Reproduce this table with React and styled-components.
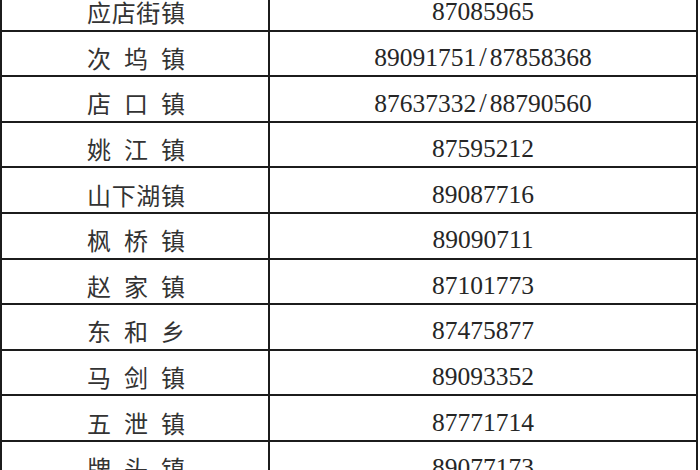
import React from 'react';
import styled, { createGlobalStyle } from 'styled-components';

const GlobalStyle = createGlobalStyle`
  html, body {
    margin: 0;
    padding: 0;
    background: #fff;
    overflow: hidden;
  }
`;

const rows = [
  { name: '应店街镇', phone: '87085965' },
  { name: '次 坞 镇', phone: '89091751/87858368' },
  { name: '店 口 镇', phone: '87637332/88790560' },
  { name: '姚 江 镇', phone: '87595212' },
  { name: '山下湖镇', phone: '89087716' },
  { name: '枫 桥 镇', phone: '89090711' },
  { name: '赵 家 镇', phone: '87101773' },
  { name: '东 和 乡', phone: '87475877' },
  { name: '马 剑 镇', phone: '89093352' },
  { name: '五 泄 镇', phone: '87771714' },
  { name: '牌 头 镇', phone: '89077173' },
];

const Page = styled.div`
  width: 700px;
  height: 470px;
  overflow: hidden;
  background: #fff;
`;

const Table = styled.div`
  width: 698px;
  margin-top: -16px;
  border-top: 2px solid #1c1c1c;
  border-left: 2px solid #1c1c1c;
  border-right: 2px solid #1c1c1c;
  box-sizing: border-box;
`;

const Row = styled.div`
  display: grid;
  grid-template-columns: 268px 1fr;
  height: 45.6px;
  border-bottom: 2px solid #1c1c1c;
  box-sizing: border-box;
`;

const Cell = styled.div`
  display: flex;
  align-items: center;
  justify-content: center;
  padding-top: 9px;
  box-sizing: border-box;
  color: #262626;
  border-right: ${p => (p.$divider ? '2px solid #1c1c1c' : 'none')};
`;

const Name = styled.span`
  display: inline-block;
  width: 98px;
  font-family: "Noto Sans CJK SC", sans-serif;
  font-size: 24px;
  line-height: 24px;
  text-align: justify;
  text-align-last: justify;
  color: #333;
  margin-left: 2px;
`;

const Phone = styled.span`
  font-family: "Liberation Serif", serif;
  font-size: 25.5px;
  line-height: 26px;
  white-space: nowrap;
`;

const Slash = styled.span`
  padding: 0 3px;
  font-size: 27px;
`;

function PhoneText({ value }) {
  const parts = value.split('/');
  return (
    <Phone>
      {parts.map((p, i) => (
        <React.Fragment key={i}>
          {i > 0 && <Slash>/</Slash>}
          {p}
        </React.Fragment>
      ))}
    </Phone>
  );
}

export default function App() {
  return (
    <Page>
      <GlobalStyle />
      <Table>
        {rows.map(r => (
          <Row key={r.name}>
            <Cell $divider>
              <Name>{r.name}</Name>
            </Cell>
            <Cell>
              <PhoneText value={r.phone} />
            </Cell>
          </Row>
        ))}
      </Table>
    </Page>
  );
}
